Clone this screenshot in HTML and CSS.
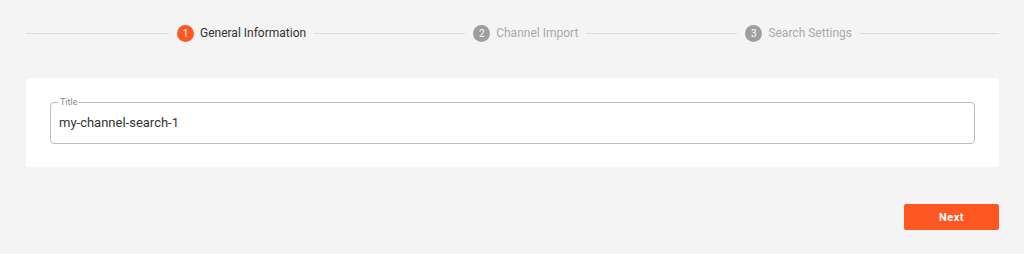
FILE: index.html
```html
<!DOCTYPE html>
<html lang="en">
<head>
    <meta charset="UTF-8">
    <meta name="viewport" content="width=device-width, initial-scale=1.0">
    <title>New Channel Search</title>

    <link rel="stylesheet" href="styles.css">
</head>
<body>

    <div class="page">

        <div class="stepper">
            <div class="connector first"></div>
            <div class="step active">
                <span class="stepIcon">1</span>
                <span class="stepLabel">General Information</span>
            </div>
            <div class="connector"></div>
            <div class="step">
                <span class="stepIcon">2</span>
                <span class="stepLabel">Channel Import</span>
            </div>
            <div class="connector"></div>
            <div class="step">
                <span class="stepIcon">3</span>
                <span class="stepLabel">Search Settings</span>
            </div>
            <div class="connector last"></div>
        </div>

        <div class="card">
            <fieldset class="field">
                <legend>Title</legend>
                <input type="text" value="my-channel-search-1">
            </fieldset>
        </div>

        <div class="actions">
            <button class="btn-next" type="button">Next</button>
        </div>

    </div>

</body>
</html>
```

FILE: styles.css
```css
*{
    margin: 0;
    padding: 0;
    box-sizing: border-box;
}

body{
    background: #f4f4f4;
    font-family: Roboto, "Liberation Sans", sans-serif;
    color: #333;
}

.page{
    padding: 0 25px 0 26px;
}

.stepper{
    display: flex;
    align-items: center;
    margin-top: 16px;
    margin-bottom: 28px;
    height: 34px;
}

.connector{
    flex: 150 1 0;
    height: 1px;
    background: #dcdcdc;
}

.connector.first{
    flex-grow: 142;
}

.connector.last{
    flex-grow: 138;
}

.step{
    display: flex;
    align-items: center;
    margin: 0 8px;
}

.stepIcon{
    width: 17px;
    height: 17px;
    border-radius: 50%;
    background: #9e9e9e;
    color: #fff;
    font-size: 10px;
    display: flex;
    justify-content: center;
    align-items: center;
    margin-right: 6px;
}

.stepLabel{
    font-size: 12px;
    color: #aaa;
}

.step.active .stepIcon{
    background: #ff5722;
}

.step.active .stepLabel{
    color: #333;
}

.card{
    background: #fff;
    border-radius: 3px;
    padding: 20px 24px 23px 24px;
}

.field{
    border: 1px solid #bdbdbd;
    border-radius: 4px;
    padding: 0 8px 0 8px;
    height: 46px;
}

.field legend{
    font-size: 9px;
    color: #888;
    padding: 0 2px;
    margin-left: -1px;
    line-height: 9px;
}

.field input{
    border: none;
    outline: none;
    background: transparent;
    width: 100%;
    font-family: Roboto, "Liberation Sans", sans-serif;
    font-size: 13px;
    color: #333;
    padding-top: 8px;
}

.actions{
    display: flex;
    justify-content: flex-end;
    margin-top: 37px;
}

.btn-next{
    width: 95px;
    height: 26px;
    background: #ff5722;
    color: #fff;
    border: none;
    border-radius: 2px;
    font-family: Roboto, "Liberation Sans", sans-serif;
    font-weight: 700;
    font-size: 11px;
    letter-spacing: 0.5px;
}
```
